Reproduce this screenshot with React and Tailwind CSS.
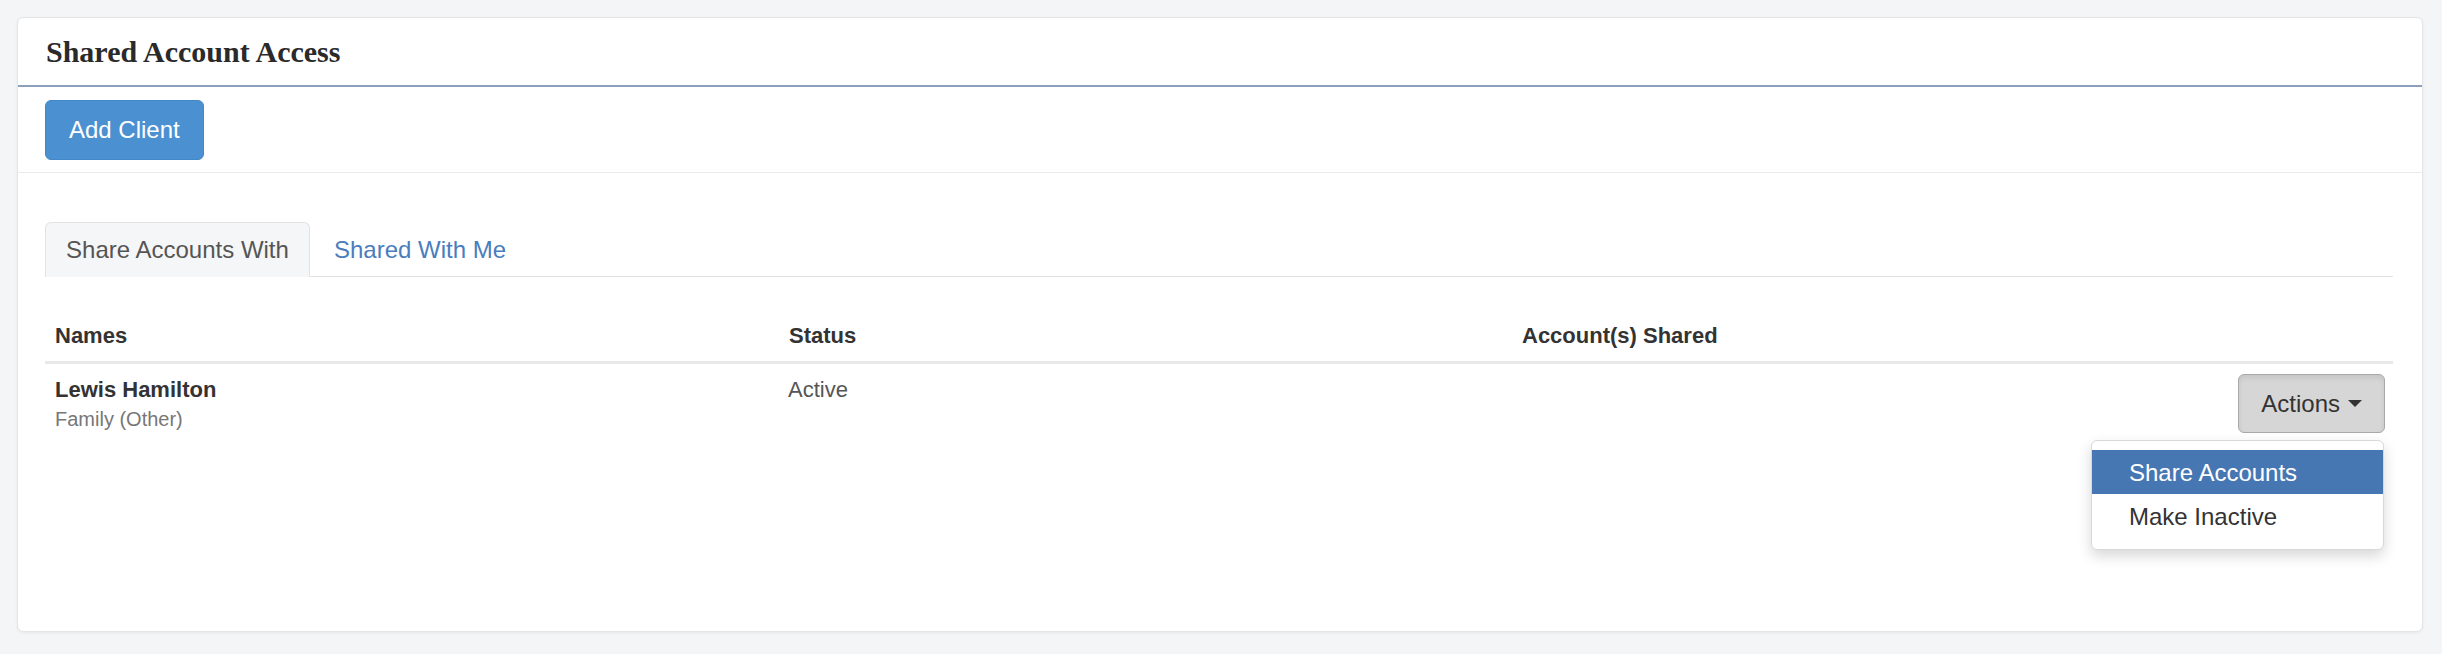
export default function App() {
  const sans = { fontFamily: '"Liberation Sans", Arial, sans-serif' };
  return (
    <div className="w-[2442px] h-[654px] bg-[#f4f5f7] pt-[17px] pl-[17px] pr-[19px]" style={sans}>
      <div className="h-[615px] bg-white border border-[#e4e5e7] rounded-[6px] shadow-[0_1px_3px_rgba(0,0,0,0.06)] flex flex-col">
        {/* Header */}
        <div className="h-[69px] flex items-center pl-[28px] border-b-2 border-[#8ca0bb] shrink-0">
          <h2
            className="text-[30px] leading-none font-bold text-[#2a2a2a]"
            style={{ fontFamily: '"Liberation Serif", "Times New Roman", serif' }}
          >
            Shared Account Access
          </h2>
        </div>

        {/* Toolbar */}
        <div className="pl-[27px] pt-[13px] pb-[12px] border-b border-[#ebebeb] shrink-0">
          <button className="h-[60px] px-[23px] bg-[#4b91d1] border border-[#4287c8] rounded-[6px] text-white text-[24px] leading-none">
            Add Client
          </button>
        </div>

        {/* Body */}
        <div className="pl-[27px] pr-[29px] pt-[49px]">
          {/* Tabs */}
          <div className="flex h-[55px] border-b border-[#e2e2e2]">
            <div className="w-[265px] h-[55px] bg-[#f5f6f7] border border-b-0 border-[#e2e3e5] rounded-t-[6px] flex items-center justify-center text-[24px] text-[#555]">
              Share Accounts With
            </div>
            <div className="h-[55px] pl-[24px] flex items-center text-[24px] text-[#4a7dbd]">
              Shared With Me
            </div>
          </div>

          {/* Table header */}
          <div className="grid grid-cols-[734px_733px_1fr] h-[87px] items-end border-b-[3px] border-[#e8e8e8] text-[22px] leading-[31px] font-bold text-[#333]">
            <div className="px-[10px] pb-[10px]">Names</div>
            <div className="px-[10px] pb-[10px]">Status</div>
            <div className="px-[10px] pb-[10px]">Account(s) Shared</div>
          </div>

          {/* Row */}
          <div className="grid grid-cols-[734px_733px_1fr] pt-[10px] text-[22px] leading-[31px]">
            <div className="px-[10px]">
              <div className="font-bold text-[#333]">Lewis Hamilton</div>
              <div className="text-[20px] leading-[28px] text-[#777]">Family (Other)</div>
            </div>
            <div className="px-[9px] text-[#555]">Active</div>
            <div className="pl-[10px] pr-[8px] flex justify-end">
              <div className="relative">
                <button className="h-[59px] pl-[22px] pr-[22px] bg-[#d6d6d6] border border-[#a9a9a9] rounded-[6px] flex items-center gap-[8px] text-[24px] text-[#333] shadow-[inset_0_3px_5px_rgba(0,0,0,0.08)]">
                  <span>Actions</span>
                  <span className="w-0 h-0 border-l-[7px] border-r-[7px] border-t-[7px] border-l-transparent border-r-transparent border-t-[#333]" />
                </button>
                <div className="absolute top-[66px] right-[1px] w-[293px] bg-white border border-[#d8d8d8] rounded-[6px] shadow-[0_6px_14px_rgba(0,0,0,0.16)] pt-[9px] pb-[11px] text-[24px]">
                  <div className="h-[44px] pl-[37px] flex items-center bg-[#4677b3] text-white">
                    Share Accounts
                  </div>
                  <div className="h-[44px] pl-[37px] flex items-center text-[#333]">
                    Make Inactive
                  </div>
                </div>
              </div>
            </div>
          </div>
        </div>
      </div>
    </div>
  );
}
